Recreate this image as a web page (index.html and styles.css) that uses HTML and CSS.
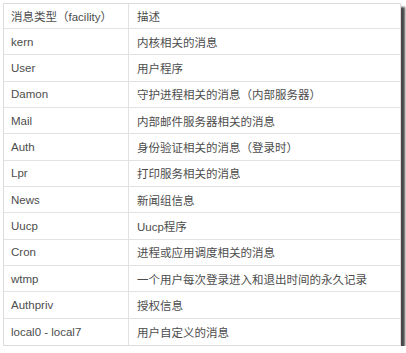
FILE: index.html
```html
<!DOCTYPE html>
<html>
<head>
<meta charset="utf-8">
<link rel="stylesheet" href="styles.css">
</head>
<body>
<div class="frame">
  <div class="grid">
    <div class="cell c1">消息类型（facility）</div><div class="cell c2">描述</div>
    <div class="cell c1">kern</div><div class="cell c2">内核相关的消息</div>
    <div class="cell c1">User</div><div class="cell c2">用户程序</div>
    <div class="cell c1">Damon</div><div class="cell c2">守护进程相关的消息（内部服务器）</div>
    <div class="cell c1">Mail</div><div class="cell c2">内部邮件服务器相关的消息</div>
    <div class="cell c1">Auth</div><div class="cell c2">身份验证相关的消息（登录时）</div>
    <div class="cell c1">Lpr</div><div class="cell c2">打印服务相关的消息</div>
    <div class="cell c1">News</div><div class="cell c2">新闻组信息</div>
    <div class="cell c1">Uucp</div><div class="cell c2">Uucp程序</div>
    <div class="cell c1">Cron</div><div class="cell c2">进程或应用调度相关的消息</div>
    <div class="cell c1">wtmp</div><div class="cell c2">一个用户每次登录进入和退出时间的永久记录</div>
    <div class="cell c1">Authpriv</div><div class="cell c2">授权信息</div>
    <div class="cell c1">local0 - local7</div><div class="cell c2">用户自定义的消息</div>
  </div>
</div>
</body>
</html>
```
FILE: styles.css
```css
html, body {
  margin: 0;
  padding: 0;
  background: #ffffff;
}
body {
  padding: 3px 0 0 3px;
}
.frame {
  width: 398px;
  height: 343px;
  box-sizing: border-box;
  border: 1px solid #dcdcdc;
  background: #ffffff;
  box-shadow: 4px 4px 2px rgba(40, 40, 40, 0.85);
}
.grid {
  display: grid;
  grid-template-columns: 125px 1fr;
  grid-template-rows: 25px repeat(12, 1fr);
  height: 100%;
}
.cell {
  display: flex;
  align-items: center;
  padding-left: 7px;
  font-family: "Liberation Sans", "Noto Sans CJK SC", sans-serif;
  font-size: 11.5px;
  color: #4d4d4d;
  border-bottom: 1px solid #e2e2e2;
  white-space: nowrap;
}
.c2 {
  padding-left: 8px;
}
.grid .cell:nth-last-child(-n+2) {
  border-bottom: none;
}
.c1 {
  border-right: 1px solid #e2e2e2;
}
```
